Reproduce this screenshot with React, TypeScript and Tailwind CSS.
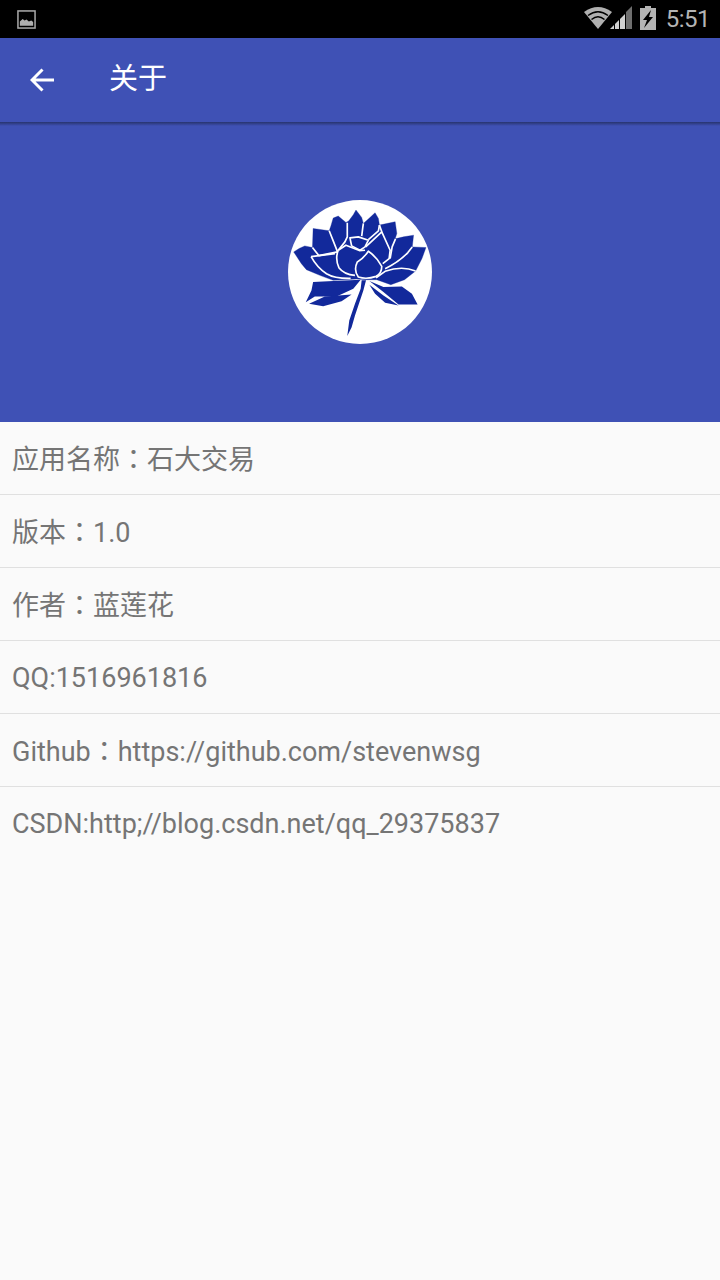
const rows = [
  ['应用名称', '石大交易'],
  ['版本', '1.0'],
  ['作者', '蓝莲花'],
  ['QQ:1516961816'],
  ['Github', 'https://github.com/stevenwsg'],
  ['CSDN:http;//blog.csdn.net/qq_29375837'],
];

// Lotus traced in the coordinates of the zoomed logo: solid shapes, then white veins on top
const flower =
  'M72 185 L88 175 L105 167 L128 172 L130 115 L178 122 L183 108 L190 84 L205 78 L228 97 L236 93 L250 74 L258 60 L275 82 L280 100 L298 84 L315 68 L325 85 L328 105 L375 95 L380 130 L375 146 L400 140 L430 135 L426 170 L467 172 L455 205 L436 242 L403 268 L362 283 L320 268 L290 268 L260 266 L190 270 L150 255 L110 238 L95 220 Z';
const solids = [
  'M130 275 L190 272 L272 268 L250 295 L200 318 L135 318 L108 335 L125 300 Z',
  'M118 340 L165 318 L245 312 L215 332 L160 347 Z',
  'M298 272 L340 290 L395 288 L425 310 L442 342 L385 342 L340 305 Z',
  'M298 283 L340 315 L385 345 L345 337 L315 310 Z',
  'M275 270 L288 270 L280 300 L255 375 L245 410 L232 436 L238 390 L255 340 L272 295 Z',
];
const veins = [
  'M128 172 L147 196 L203 185',
  'M124 199 L195 190',
  'M124 199 Q142 232 170 250 Q195 265 242 264',
  'M178 122 L190 152 L203 185',
  'M232 98 L232 140 L225 155 L205 180',
  'M280 100 L275 138',
  'M240 143 L265 140 L295 150 L285 170 L270 180 L245 167 Z',
  'M328 105 L325 122 L295 148',
  'M328 105 L335 125',
  'M287 170 L335 125 L360 180 L357 205 L338 220',
  'M376 146 L366 170 L360 205',
  'M426 170 L413 187 Q385 216 345 235',
  'M436 242 Q395 225 345 243 L318 262',
  'M295 183 Q320 200 335 228 Q335 250 318 258 Q290 268 265 260 Q250 240 262 215 Q280 205 295 183 Z',
  'M205 180 Q195 205 207 232 Q222 252 255 255',
  'M205 180 L228 165 L268 181 L285 180',
];

function Lotus() {
  return (
    <svg viewBox="55 30 430 430" className="w-[144px] h-[144px]">
      <path d={flower} fill="#12299b" stroke="#12299b" strokeWidth="1" strokeLinejoin="round" />
      {solids.map((d) => (
        <path key={d} d={d} fill="#12299b" />
      ))}
      {veins.map((d) => (
        <path key={d} d={d} fill="none" stroke="#fff" strokeWidth="5" strokeLinejoin="round" />
      ))}
    </svg>
  );
}

function ImageIcon() {
  return (
    <svg width="19" height="19" viewBox="0 0 20 20">
      <rect x="1" y="1" width="18" height="18" fill="none" stroke="#a8a8a8" strokeWidth="1.6" />
      <path d="M3 16.5 V12 L6 9.5 L8 11 L10 10 L12.5 12 L15 11 L17 12.5 V16.5 Z" fill="#b0b0b0" />
    </svg>
  );
}

function StatusIcons() {
  return (
    <svg width="72" height="26" viewBox="0 0 72 26">
      <path d="M0 6 Q14 -4 28 6 L14 23 Z" fill="#b0b0b0" />
      <path d="M4 9.5 Q14 2 24 9.5" fill="none" stroke="#000" strokeWidth="1.5" />
      <path d="M7.5 13.5 Q14 8 20.5 13.5" fill="none" stroke="#000" strokeWidth="1.5" />
      <path d="M26 23 L30 23 L30 19 Z" fill="#d0d0d0" />
      <path d="M31 23 L35 23 L35 14 L31 18 Z" fill="#d0d0d0" />
      <path d="M36 23 L41 23 L41 8 L36 13 Z" fill="#d0d0d0" />
      <path d="M42 23 L48 23 L48 0 L42 6 Z" fill="#6e6e6e" />
      <path d="M56 2 H61 V0 H67 V2 H72 V24 H56 Z" fill="#b4b4b4" />
      <path d="M67 4 L59 14 H63 L60 22 L69 11 H65 Z" fill="#000" />
    </svg>
  );
}

export default function App() {
  return (
    <div
      className="w-[720px] h-[1280px] bg-[#fafafa] flex flex-col overflow-hidden"
      style={{ fontFamily: 'Roboto, "Noto Sans CJK SC", sans-serif' }}
    >
      <div className="h-[38px] bg-black flex items-center pl-[17px] pr-[10px]">
        <ImageIcon />
        <div className="ml-auto flex items-center gap-[10px]">
          <StatusIcons />
          <span className="text-[24px] leading-[38px] tracking-[-0.5px] text-[#b4b4b4]">5:51</span>
        </div>
      </div>

      <div className="h-[84px] bg-[#3f51b5] flex items-center pl-[30px]">
        <svg width="24" height="24" viewBox="0 0 24 24" fill="none" stroke="#fff" strokeWidth="3">
          <path d="M24 12 H3 M12.5 1.5 L2 12 L12.5 22.5" />
        </svg>
        <span className="ml-[55px] pb-[1px] text-[29px] text-white">关于</span>
      </div>

      <div className="relative h-[300px] bg-[#3f51b5] flex items-center justify-center">
        <div className="absolute top-0 left-0 right-0 h-[4px] bg-gradient-to-b from-[#28346f] to-[#3f51b5]" />
        <div className="w-[144px] h-[144px] rounded-full bg-white">
          <Lotus />
        </div>
      </div>

      <div className="flex flex-col">
        {rows.map((parts, i) => (
          <div
            key={parts[0]}
            className={`h-[73px] flex items-center pl-[12px] pt-[2px] text-[27px] text-[#757575] ${
              i < rows.length - 1 ? 'border-b border-[#e0e0e0]' : ''
            }`}
          >
            <span>
              {parts[0]}
              {parts[1] && <span className="font-['Noto_Sans_CJK_TC']">：</span>}
              {parts[1]}
            </span>
          </div>
        ))}
      </div>
    </div>
  );
}
